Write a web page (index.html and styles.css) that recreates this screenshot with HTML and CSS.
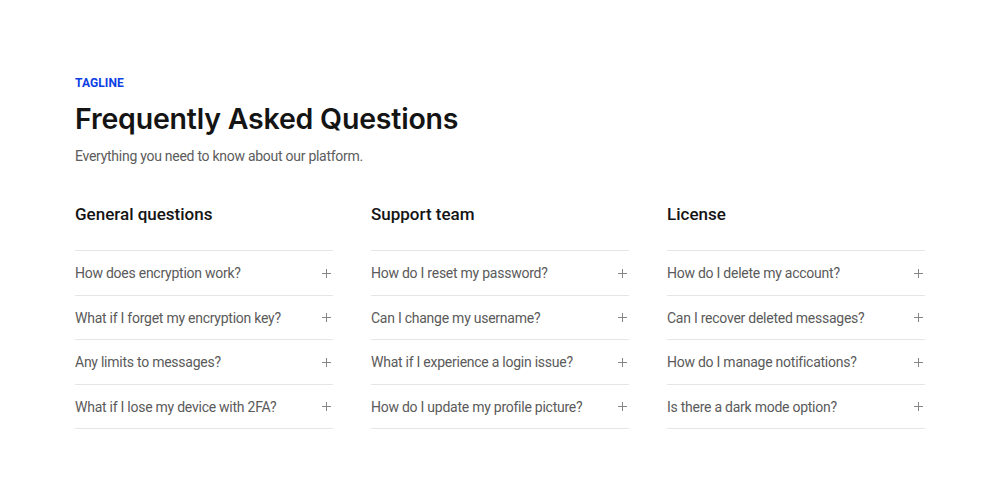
FILE: index.html
```html
<!DOCTYPE html>
<html lang="en">
<head>
<meta charset="utf-8">
<title>FAQ</title>
<link rel="stylesheet" href="styles.css">
</head>
<body>
<section class="faq">
  <p class="tagline">TAGLINE</p>
  <h1 class="title">Frequently Asked Questions</h1>
  <p class="subtitle">Everything you need to know about our platform.</p>
  <div class="columns">
    <div class="col">
      <h2 class="col-title">General questions</h2>
      <ul class="list">
        <li class="item"><span>How does encryption work?</span><span class="plus"></span></li>
        <li class="item"><span>What if I forget my encryption key?</span><span class="plus"></span></li>
        <li class="item"><span>Any limits to messages?</span><span class="plus"></span></li>
        <li class="item"><span>What if I lose my device with 2FA?</span><span class="plus"></span></li>
      </ul>
    </div>
    <div class="col">
      <h2 class="col-title">Support team</h2>
      <ul class="list">
        <li class="item"><span>How do I reset my password?</span><span class="plus"></span></li>
        <li class="item"><span>Can I change my username?</span><span class="plus"></span></li>
        <li class="item"><span>What if I experience a login issue?</span><span class="plus"></span></li>
        <li class="item"><span>How do I update my profile picture?</span><span class="plus"></span></li>
      </ul>
    </div>
    <div class="col">
      <h2 class="col-title">License</h2>
      <ul class="list">
        <li class="item"><span>How do I delete my account?</span><span class="plus"></span></li>
        <li class="item"><span>Can I recover deleted messages?</span><span class="plus"></span></li>
        <li class="item"><span>How do I manage notifications?</span><span class="plus"></span></li>
        <li class="item"><span>Is there a dark mode option?</span><span class="plus"></span></li>
      </ul>
    </div>
  </div>
</section>
</body>
</html>
```
FILE: styles.css
```css
* { box-sizing: border-box; }
html, body { margin: 0; padding: 0; background: #fff; }
body { font-family: Roboto, "Noto Sans", sans-serif; color: #141414; }
.faq { width: 850px; margin: 0 auto; padding-top: 75px; }
.tagline { margin: 0; font-size: 12px; line-height: 16px; font-weight: 700; color: #0b3ee3; letter-spacing: 0.1px; }
.title { margin: 10px 0 0; font-family: Inter, Roboto, sans-serif; font-size: 28.5px; line-height: 36px; font-weight: 600; letter-spacing: -0.2px; color: #141414; }
.subtitle { margin: 9px 0 0; font-size: 14px; line-height: 20px; letter-spacing: -0.27px; color: #5c5c5c; }
.columns { display: grid; grid-template-columns: repeat(3, 1fr); column-gap: 38px; margin-top: 36px; }
.col-title { margin: 0; font-size: 17px; line-height: 24px; font-weight: 500; color: #141414; }
.list { list-style: none; margin: 24px 0 0; padding: 0; border-top: 1px solid #e6e6e6; }
.item { display: flex; justify-content: space-between; align-items: center; padding: 12px 0 11.5px; font-size: 14px; line-height: 20px; letter-spacing: -0.25px; color: #5a5a5a; border-bottom: 1px solid #e6e6e6; }
.plus { position: relative; width: 9px; height: 9px; margin-right: 2px; }
.plus::before, .plus::after { content: ""; position: absolute; background: #858585; }
.plus::before { left: 0; top: 4px; width: 9px; height: 1.2px; }
.plus::after { left: 4px; top: 0; width: 1.2px; height: 9px; }
```
